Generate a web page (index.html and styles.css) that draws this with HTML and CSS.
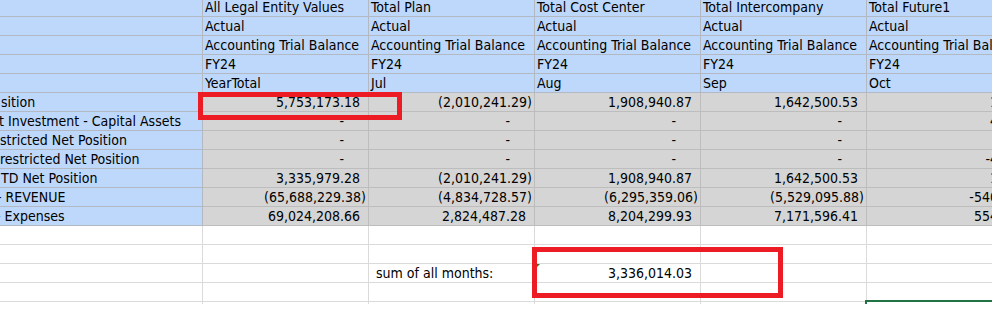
FILE: index.html
```html
<!DOCTYPE html>
<html>
<head>
<meta charset="utf-8">
<title>Sheet</title>
<link rel="stylesheet" href="styles.css">
</head>
<body>
<div class="page">
  <div class="sheet">
    <div class="grid">
      <!-- row 1 -->
      <div class="c b"></div>
      <div class="c b">All Legal Entity Values</div>
      <div class="c b">Total Plan</div>
      <div class="c b">Total Cost Center</div>
      <div class="c b">Total Intercompany</div>
      <div class="c b">Total Future1</div>
      <!-- row 2 -->
      <div class="c b"></div>
      <div class="c b">Actual</div>
      <div class="c b">Actual</div>
      <div class="c b">Actual</div>
      <div class="c b">Actual</div>
      <div class="c b">Actual</div>
      <!-- row 3 -->
      <div class="c b"></div>
      <div class="c b">Accounting Trial Balance</div>
      <div class="c b">Accounting Trial Balance</div>
      <div class="c b">Accounting Trial Balance</div>
      <div class="c b">Accounting Trial Balance</div>
      <div class="c b">Accounting Trial Balance</div>
      <!-- row 4 -->
      <div class="c b"></div>
      <div class="c b">FY24</div>
      <div class="c b">FY24</div>
      <div class="c b">FY24</div>
      <div class="c b">FY24</div>
      <div class="c b">FY24</div>
      <!-- row 5 -->
      <div class="c b"></div>
      <div class="c b">YearTotal</div>
      <div class="c b">Jul</div>
      <div class="c b">Aug</div>
      <div class="c b">Sep</div>
      <div class="c b">Oct</div>
      <!-- row 6 -->
      <div class="c b lab l1">sition</div>
      <div class="c g pos">5,753,173.18</div>
      <div class="c g neg">(2,010,241.29)</div>
      <div class="c g pos">1,908,940.87</div>
      <div class="c g pos">1,642,500.53</div>
      <div class="c g gen">13883.9</div>
      <!-- row 7 -->
      <div class="c b lab lm1">t Investment - Capital Assets</div>
      <div class="c g dash">-</div>
      <div class="c g dash">-</div>
      <div class="c g dash">-</div>
      <div class="c g dash">-</div>
      <div class="c g gen">4137.25</div>
      <!-- row 8 -->
      <div class="c b lab">stricted Net Position</div>
      <div class="c g dash">-</div>
      <div class="c g dash">-</div>
      <div class="c g dash">-</div>
      <div class="c g dash">-</div>
      <div class="c g gen"></div>
      <!-- row 9 -->
      <div class="c b lab">restricted Net Position</div>
      <div class="c g dash">-</div>
      <div class="c g dash">-</div>
      <div class="c g dash">-</div>
      <div class="c g dash">-</div>
      <div class="c g gen">-4137.25</div>
      <!-- row 10 -->
      <div class="c b lab l1">TD Net Position</div>
      <div class="c g pos">3,335,979.28</div>
      <div class="c g neg">(2,010,241.29)</div>
      <div class="c g pos">1,908,940.87</div>
      <div class="c g pos">1,642,500.53</div>
      <div class="c g gen">13883.9</div>
      <!-- row 11 -->
      <div class="c b lab lm3">- REVENUE</div>
      <div class="c g neg">(65,688,229.38)</div>
      <div class="c g neg">(4,834,728.57)</div>
      <div class="c g neg">(6,295,359.06)</div>
      <div class="c g neg">(5,529,095.88)</div>
      <div class="c g gen">-540133.31</div>
      <!-- row 12 -->
      <div class="c b lab lm4">- Expenses</div>
      <div class="c g pos">69,024,208.66</div>
      <div class="c g pos">2,824,487.28</div>
      <div class="c g pos">8,204,299.93</div>
      <div class="c g pos">7,171,596.41</div>
      <div class="c g gen">554017.21</div>
      <!-- row 13 -->
      <div class="c w"></div>
      <div class="c w"></div>
      <div class="c w"></div>
      <div class="c w"></div>
      <div class="c w"></div>
      <div class="c w"></div>
      <!-- row 14 -->
      <div class="c w"></div>
      <div class="c w"></div>
      <div class="c w"></div>
      <div class="c w"></div>
      <div class="c w"></div>
      <div class="c w"></div>
      <!-- row 15 -->
      <div class="c w"></div>
      <div class="c w"></div>
      <div class="c w note">sum of all months:</div>
      <div class="c w pos err">3,336,014.03</div>
      <div class="c w"></div>
      <div class="c w"></div>
      <!-- row 16 -->
      <div class="c w"></div>
      <div class="c w"></div>
      <div class="c w"></div>
      <div class="c w"></div>
      <div class="c w"></div>
      <div class="c w"></div>
      <!-- row 17 -->
      <div class="c w"></div>
      <div class="c w"></div>
      <div class="c w"></div>
      <div class="c w"></div>
      <div class="c w"></div>
      <div class="c w"></div>
    </div>
    <div class="selection"></div>
  </div>
  <div class="mark mark-total"></div>
  <div class="mark mark-sum"></div>
</div>
</body>
</html>
```

FILE: styles.css
```css
* {
  box-sizing: border-box;
}

html,
body {
  margin: 0;
  padding: 0;
  background: #ffffff;
  overflow: hidden;
}

body {
  width: 992px;
  height: 314px;
  font-family: "DejaVu Sans Condensed", "DejaVu Sans", sans-serif;
  font-size: 14px;
  color: #000000;
}

.page {
  position: relative;
  width: 992px;
  height: 314px;
  overflow: hidden;
  background: #ffffff;
}

.sheet {
  position: relative;
  height: 304px;
  overflow: hidden;
}

.grid {
  display: grid;
  grid-template-columns: 203px 166px 166px 166px 166px 178px;
  grid-auto-rows: 19px;
  width: max-content;
  margin-top: -2px;
}

.c {
  border-right: 1px solid #d9d9d9;
  border-bottom: 1px solid #d9d9d9;
  line-height: 18px;
  padding: 0 2px;
  white-space: nowrap;
  overflow: hidden;
}

.b {
  background: #bdd8fa;
  border-color: #b3b9c2;
}

.g {
  background: #d5d5d5;
  border-color: #bdbdbd;
}

.w {
  background: #ffffff;
  border-color: #dadada;
}

.lab {
  padding-left: 0;
}

.l1 {
  text-indent: 1px;
}

.lm1 {
  text-indent: -1px;
}

.lm3 {
  text-indent: -3px;
}

.lm4 {
  text-indent: -4px;
}

.pos,
.neg,
.dash,
.gen {
  text-align: right;
}

.pos {
  padding-right: 8px;
}

.neg {
  padding-right: 2px;
}

.dash {
  padding-right: 24px;
}

.gen {
  padding-right: 2px;
}

.note {
  padding-left: 7px;
}

.err {
  position: relative;
}

.err::before {
  content: "";
  position: absolute;
  left: 0;
  top: 0;
  border-top: 5px solid #1e7b1e;
  border-right: 5px solid transparent;
}

.selection {
  position: absolute;
  left: 865px;
  top: 300px;
  width: 200px;
  height: 30px;
  border-top: 2px solid #217346;
  border-left: 2px solid #217346;
}

.mark {
  position: absolute;
  border: 5px solid #ed1c24;
}

.mark-total {
  left: 198px;
  top: 92px;
  width: 204px;
  height: 28px;
}

.mark-sum {
  left: 532px;
  top: 247px;
  width: 251px;
  height: 51px;
}
```
